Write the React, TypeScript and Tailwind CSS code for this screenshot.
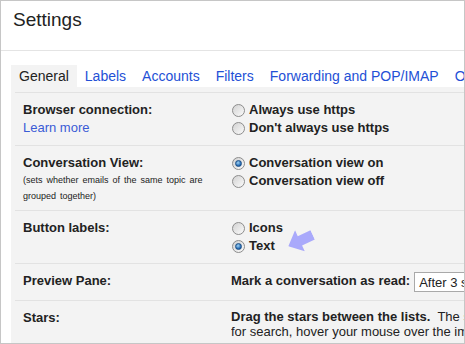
import type { ReactNode } from "react";

const Radio = ({ checked }: { checked?: boolean }) => (
  <span className="inline-flex h-[13px] w-[13px] shrink-0 items-center justify-center rounded-full border border-[#8c8c8c] bg-linear-to-br from-[#d2d2d2] to-[#fbfbfb]">
    {checked && (
      <span className="h-[7px] w-[7px] rounded-full border border-[#1c4f86] bg-[radial-gradient(circle_at_40%_35%,#9fd3f5,#1b62ad_70%)]" />
    )}
  </span>
);

const Option = ({ label, checked }: { label: string; checked?: boolean }) => (
  <label className="flex h-[18px] items-center gap-[4px] pl-[1px] font-bold">
    <Radio checked={checked} />
    <span>{label}</span>
  </label>
);

const Row = ({
  label,
  height,
  children,
}: {
  label: ReactNode;
  height: string;
  children: ReactNode;
}) => (
  <div className={`flex border-t border-[#e2e2e2] pl-[8px] pt-[8px] ${height}`}>
    <div className="w-[208px] shrink-0">{label}</div>
    <div className="min-w-0 flex-1 overflow-hidden">{children}</div>
  </div>
);

const tabs = ["Labels", "Accounts", "Filters", "Forwarding and POP/IMAP", "Offline"];

export default function App() {
  return (
    <div className="relative h-[344px] w-[465px] overflow-hidden border border-[#c6c6c6] bg-white font-['Liberation_Sans',Arial,sans-serif] text-[13px] leading-[18px] text-[#222]">
      <div className="h-[50px] border-b border-[#e4e4e4] pl-[12px] pt-[7px] text-[19px] leading-[24px]">
        Settings
      </div>

      <div className="ml-[10px] mt-[14px] flex whitespace-nowrap text-[14px] leading-[22px]">
        <div className="bg-[#f3f3f3] px-[8px] text-[#222]">General</div>
        {tabs.map((tab) => (
          <div key={tab} className="px-[8px] text-[#2350d6]">
            {tab}
          </div>
        ))}
      </div>

      <div className="ml-[10px] h-full bg-[#f3f3f3] pl-[4px] pt-[5px]">
        <Row
          height="h-[53px]"
          label={
            <>
              <div className="font-bold">Browser connection:</div>
              <div className="text-[#3a5bd6]">Learn more</div>
            </>
          }
        >
          <Option label="Always use https" />
          <Option label="Don't always use https" />
        </Row>

        <Row
          height="h-[65px]"
          label={
            <>
              <div className="font-bold">Conversation View:</div>
              <div className="text-[9px] leading-[16px] [word-spacing:1.5px]">
                (sets whether emails of the same topic are
                <br />
                grouped together)
              </div>
            </>
          }
        >
          <Option label="Conversation view on" checked />
          <Option label="Conversation view off" />
        </Row>

        <Row height="h-[53px]" label={<div className="font-bold">Button labels:</div>}>
          <Option label="Icons" />
          <Option label="Text" checked />
        </Row>

        <Row height="h-[37px]" label={<div className="font-bold">Preview Pane:</div>}>
          <div className="flex items-start whitespace-nowrap">
            <span className="font-bold">Mark a conversation as read:</span>
            <span className="ml-[4px] h-[20px] w-[80px] shrink-0 border border-[#a9a9a9] bg-white pl-[4px] pt-[2px] leading-[16px]">
              After 3 seconds
            </span>
          </div>
        </Row>

        <Row height="h-[60px]" label={<div className="font-bold">Stars:</div>}>
          <div className="whitespace-nowrap leading-[15px]">
            <div>
              <span className="font-bold">Drag the stars between the lists.</span>
              &nbsp; The stars will rotate in the order shown below when you click
              successively. To learn the name of a star
            </div>
            <div>for search, hover your mouse over the image.</div>
          </div>
        </Row>
      </div>

      <svg
        className="absolute left-[286px] top-[228px] h-[23px] w-[27px] rotate-[-25deg]"
        viewBox="0 0 21 18"
      >
        <path d="M0 9 L10 0 L10 5 L21 5 L21 13 L10 13 L10 18 Z" fill="#a9a9fb" />
      </svg>
    </div>
  );
}
